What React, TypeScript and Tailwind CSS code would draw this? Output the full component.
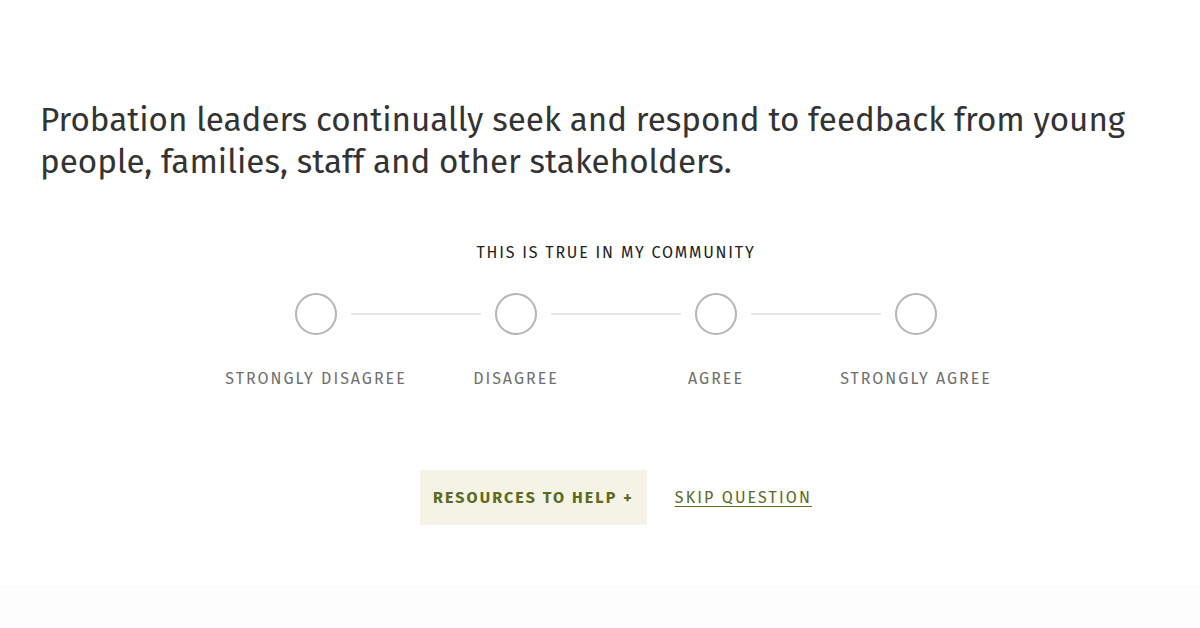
const OPTIONS = ["Strongly Disagree", "Disagree", "Agree", "Strongly Agree"];

export default function App() {
  return (
    <div
      className="w-[1200px] h-[628px] bg-white flex flex-col overflow-hidden"
      style={{ fontFamily: '"Fira Sans", "Open Sans", "Noto Sans", sans-serif' }}
    >
      <div className="flex-1 pl-[40px] pr-[8px] pt-[99px]">
        <h1 className="text-[33.2px] leading-[42px] text-[#333333]">
          Probation leaders continually seek and respond to feedback from young people, families, staff and other
          stakeholders.
        </h1>

        <p className="mt-[58px] text-center text-[16px] tracking-[1.8px] text-[#222222] uppercase">
          This is true in my community
        </p>

        <div className="mt-[28px] flex justify-center">
          {OPTIONS.map((o, i) => (
            <div key={o} className="relative w-[200px] flex flex-col items-center">
              {i < OPTIONS.length - 1 && (
                <div className="absolute top-[20px] left-[135px] w-[130px] h-[2px] bg-[#e8e8e8]" />
              )}
              <button className="w-[42px] h-[42px] rounded-full border-2 border-[#b5b5b5] bg-white" />
              <span className="mt-[32px] text-[16px] tracking-[2px] text-[#6f6f6f] uppercase">{o}</span>
            </div>
          ))}
        </div>

        <div className="mt-[79px] flex justify-center items-center gap-[28px]">
          <button className="h-[55px] px-[13px] bg-[#f5f3e6] text-[#5b6b1f] font-bold text-[16px] tracking-[2.1px] uppercase">
            Resources to help +
          </button>
          <a href="#" className="text-[#5b6b1f] text-[16px] tracking-[2.1px] uppercase underline underline-offset-[3px]">
            Skip question
          </a>
        </div>
      </div>
      <div className="h-[42px] bg-[#fdfdfd] border-t border-[#f8f8f8]" />
    </div>
  );
}
